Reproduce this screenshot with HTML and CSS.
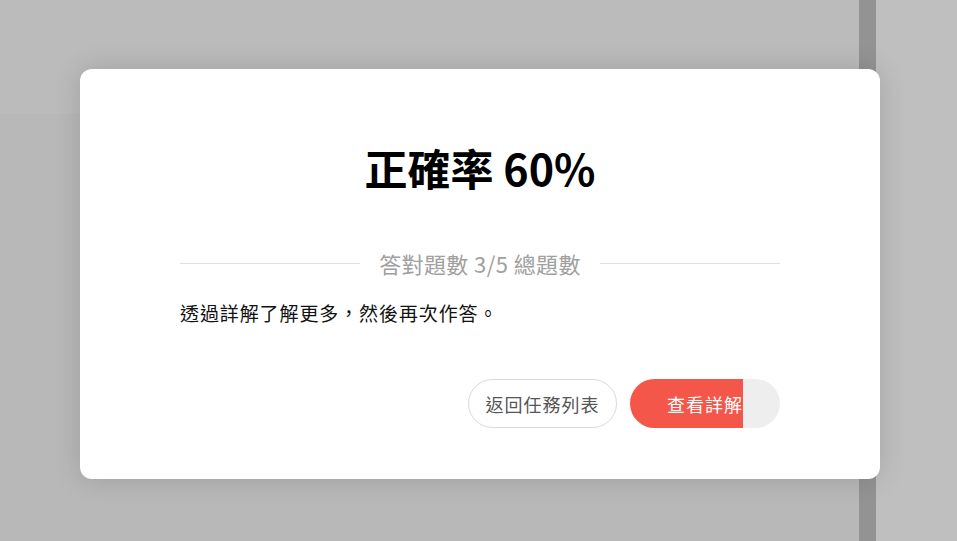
FILE: index.html
```html
<!DOCTYPE html>
<html lang="zh-Hant">
<head>
<meta charset="utf-8">
<title>正確率</title>
<link rel="stylesheet" href="styles.css">
</head>
<body>
<div class="page">
  <div class="main">
    <div class="header"></div>
    <div class="content"></div>
  </div>
  <div class="scrollbar"></div>
  <div class="side"></div>
</div>
<div class="modal">
  <h1 class="title">正確率 60%</h1>
  <div class="divider"><span class="line"></span><span class="divider-text">答對題數 3/5 總題數</span><span class="line"></span></div>
  <p class="message">透過詳解了解更多，然後再次作答。</p>
  <div class="actions">
    <button class="btn btn-outline">返回任務列表</button>
    <button class="btn btn-primary" style="--fill: 113px">查看詳解</button>
  </div>
</div>
</body>
</html>
```
FILE: styles.css
```css
html, body {
  margin: 0;
  padding: 0;
  width: 957px;
  height: 541px;
  overflow: hidden;
  font-family: "Noto Sans CJK TC", "Noto Sans", sans-serif;
}
.page {
  display: flex;
  width: 957px;
  height: 541px;
}
.main {
  width: 859px;
  display: flex;
  flex-direction: column;
}
.header {
  height: 114px;
  background: #bbbbbb;
}
.content {
  flex: 1;
  background: #b8b8b8;
}
.scrollbar {
  width: 17px;
  background: #939393;
}
.side {
  flex: 1;
  background: #bfbfbf;
}
.modal {
  position: absolute;
  left: 80px;
  top: 69px;
  width: 800px;
  height: 410px;
  box-sizing: border-box;
  padding: 69px 100px 51px;
  background: #fff;
  border-radius: 12px;
  box-shadow: 0 0 28px rgba(0, 0, 0, 0.14);
  display: flex;
  flex-direction: column;
}
.title {
  margin: 0;
  height: 59px;
  line-height: 59px;
  font-size: 43px;
  font-weight: 700;
  text-align: center;
  color: #000;
}
.divider {
  margin-top: 51px;
  height: 30px;
  display: flex;
  align-items: center;
  gap: 19px;
}
.line {
  flex: 1;
  height: 1px;
  background: #e0e0e0;
}
.divider-text {
  font-size: 22px;
  letter-spacing: 0.4px;
  line-height: 30px;
  color: #a0a0a0;
}
.message {
  margin: 20px 0 0;
  font-size: 19px;
  letter-spacing: 0.9px;
  line-height: 30px;
  color: #111;
}
.actions {
  margin-top: 51px;
  display: flex;
  justify-content: flex-end;
  gap: 13px;
}
.btn {
  height: 49px;
  border-radius: 25px;
  font-family: "Noto Sans CJK TC", "Noto Sans", sans-serif;
  font-size: 18px;
  letter-spacing: 1px;
  padding: 0;
  cursor: pointer;
}
.btn-outline {
  width: 149px;
  background: #fff;
  border: 1px solid #d9d9d9;
  color: #555;
}
.btn-primary {
  width: 150px;
  border: none;
  color: #fff;
  background: linear-gradient(to right, #f4564a 0, #f4564a var(--fill), #eeeeee var(--fill));
}
```
